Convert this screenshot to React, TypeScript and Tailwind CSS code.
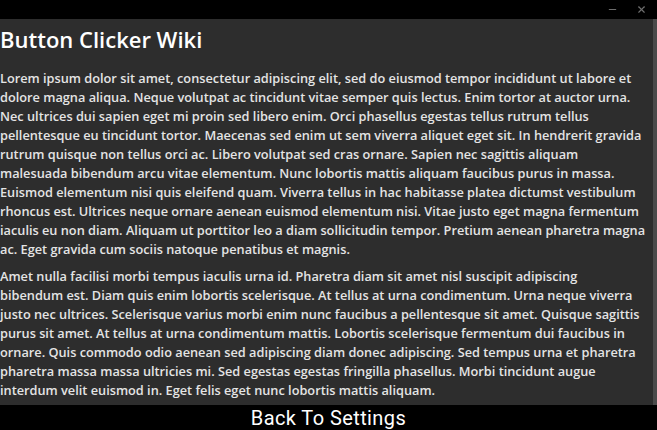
import { Minus, X } from 'lucide-react';

const intro = [
  'Lorem ipsum dolor sit amet, consectetur adipiscing elit, sed do eiusmod tempor incididunt ut labore et',
  'dolore magna aliqua. Neque volutpat ac tincidunt vitae semper quis lectus. Enim tortor at auctor urna.',
  'Nec ultrices dui sapien eget mi proin sed libero enim. Orci phasellus egestas tellus rutrum tellus',
  'pellentesque eu tincidunt tortor. Maecenas sed enim ut sem viverra aliquet eget sit. In hendrerit gravida',
  'rutrum quisque non tellus orci ac. Libero volutpat sed cras ornare. Sapien nec sagittis aliquam',
  'malesuada bibendum arcu vitae elementum. Nunc lobortis mattis aliquam faucibus purus in massa.',
  'Euismod elementum nisi quis eleifend quam. Viverra tellus in hac habitasse platea dictumst vestibulum',
  'rhoncus est. Ultrices neque ornare aenean euismod elementum nisi. Vitae justo eget magna fermentum',
  'iaculis eu non diam. Aliquam ut porttitor leo a diam sollicitudin tempor. Pretium aenean pharetra magna',
  'ac. Eget gravida cum sociis natoque penatibus et magnis.',
];

const second = [
  'Amet nulla facilisi morbi tempus iaculis urna id. Pharetra diam sit amet nisl suscipit adipiscing',
  'bibendum est. Diam quis enim lobortis scelerisque. At tellus at urna condimentum. Urna neque viverra',
  'justo nec ultrices. Scelerisque varius morbi enim nunc faucibus a pellentesque sit amet. Quisque sagittis',
  'purus sit amet. At tellus at urna condimentum mattis. Lobortis scelerisque fermentum dui faucibus in',
  'ornare. Quis commodo odio aenean sed adipiscing diam donec adipiscing. Sed tempus urna et pharetra',
  'pharetra massa massa ultricies mi. Sed egestas egestas fringilla phasellus. Morbi tincidunt augue',
  'interdum velit euismod in. Eget felis eget nunc lobortis mattis aliquam.',
];

function Paragraph({ lines }: { lines: string[] }) {
  return (
    <p className="text-[12.75px] leading-[19px] font-semibold text-[#e4e4e4]">
      {lines.map((line, i) => (
        <span key={i} className="block whitespace-nowrap">
          {line}
        </span>
      ))}
    </p>
  );
}

export default function App() {
  return (
    <div className="w-[657px] h-[430px] flex flex-col bg-black overflow-hidden" style={{ fontFamily: '"Open Sans", "Noto Sans", sans-serif' }}>
      {/* Title bar */}
      <div className="h-[19px] flex items-center justify-end gap-[18px] pr-[10px] text-[#6e6e6e]">
        <Minus size={11} strokeWidth={2.5} />
        <X size={11} strokeWidth={2.5} />
      </div>

      {/* Wiki body */}
      <div className="flex-1 flex bg-[#2d2d2d] min-h-0">
        <div className="flex-1 pt-[7px]">
          <h1 className="text-[22px] leading-[26px] font-semibold text-white mb-[17px]">Button Clicker Wiki</h1>
          <div className="flex flex-col gap-[8px]">
            <Paragraph lines={intro} />
            <Paragraph lines={second} />
          </div>
        </div>
        <div className="w-[4px] bg-[#4a4a4a]" />
      </div>

      {/* Footer */}
      <div className="h-[25px] flex items-center justify-center">
        <span className="text-[20px] tracking-[0.4px] text-white" style={{ fontFamily: 'Roboto, sans-serif' }}>
          Back To Settings
        </span>
      </div>
    </div>
  );
}
